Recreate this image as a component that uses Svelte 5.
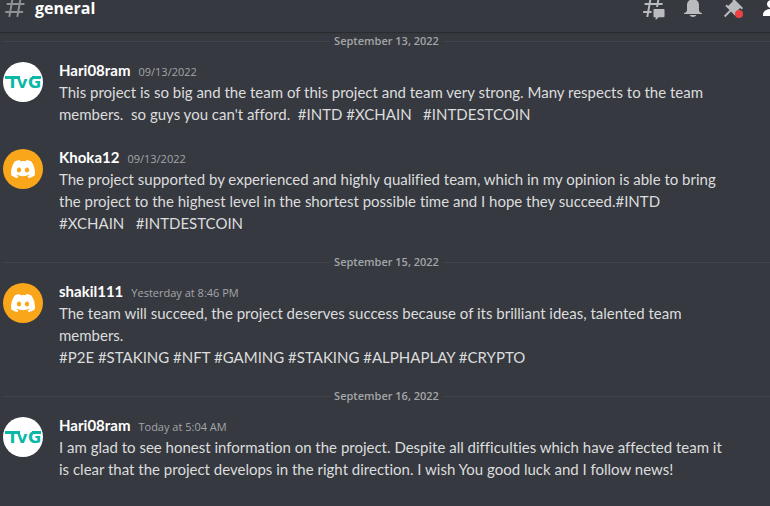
<script lang="ts">
    type Message = {
        author: string
        time: string
        avatar: "tvg" | "discord"
        text: string
    }

    type Day = {
        date: string
        messages: Message[]
    }

    const days: Day[] = [
        {
            date: "September 13, 2022",
            messages: [
                {
                    author: "Hari08ram",
                    time: "09/13/2022",
                    avatar: "tvg",
                    text: "This project is so big and the team of this project and team very strong. Many respects to the team members.  so guys you can't afford.  #INTD #XCHAIN   #INTDESTCOIN",
                },
                {
                    author: "Khoka12",
                    time: "09/13/2022",
                    avatar: "discord",
                    text: "The project supported by experienced and highly qualified team, which in my opinion is able to bring the project to the highest level in the shortest possible time and I hope they succeed.#INTD #XCHAIN   #INTDESTCOIN",
                },
            ],
        },
        {
            date: "September 15, 2022",
            messages: [
                {
                    author: "shakil111",
                    time: "Yesterday at 8:46 PM",
                    avatar: "discord",
                    text: "The team will succeed, the project deserves success because of its brilliant ideas, talented team members.\n#P2E #STAKING #NFT #GAMING #STAKING #ALPHAPLAY #CRYPTO",
                },
            ],
        },
        {
            date: "September 16, 2022",
            messages: [
                {
                    author: "Hari08ram",
                    time: "Today at 5:04 AM",
                    avatar: "tvg",
                    text: "I am glad to see honest information on the project. Despite all difficulties which have affected team it is clear that the project develops in the right direction. I wish You good luck and I follow news!",
                },
            ],
        },
    ]
</script>

<main>
    <header>
        <svg class="hash" viewBox="0 0 24 24" aria-hidden="true">
            <path fill-rule="evenodd" d="M5.88657 21C5.57547 21 5.3399 20.7189 5.39427 20.4126L6.00001 17H2.59511C2.28449 17 2.04905 16.7198 2.10259 16.4138L2.27759 15.4138C2.31946 15.1746 2.52722 15 2.77011 15H6.35001L7.41001 9H4.00511C3.69449 9 3.45905 8.71977 3.51259 8.41381L3.68759 7.41381C3.72946 7.17456 3.93722 7 4.18011 7H7.76001L8.39677 3.41262C8.43914 3.17391 8.64664 3 8.88907 3H9.87344C10.1845 3 10.4201 3.28107 10.3657 3.58738L9.76001 7H15.76L16.3968 3.41262C16.4391 3.17391 16.6466 3 16.8891 3H17.8734C18.1845 3 18.4201 3.28107 18.3657 3.58738L17.76 7H21.1649C21.4755 7 21.711 7.28023 21.6574 7.58619L21.4824 8.58619C21.4406 8.82544 21.2328 9 20.9899 9H17.41L16.35 15H19.7549C20.0655 15 20.301 15.2802 20.2474 15.5862L20.0724 16.5862C20.0306 16.8254 19.8228 17 19.5799 17H16L15.3632 20.5874C15.3209 20.8261 15.1134 21 14.8709 21H13.8866C13.5755 21 13.3399 20.7189 13.3943 20.4126L14 17H8.00001L7.36325 20.5874C7.32088 20.8261 7.11337 21 6.87094 21H5.88657ZM9.41045 9L8.35045 15H14.3504L15.4104 9H9.41045Z" />
        </svg>
        <h1>general</h1>

        <div class="toolbar">
            <button aria-label="Threads">
                <svg viewBox="0 0 24 24">
                    <path d="M5.43309 21C5.35842 21 5.30189 20.9325 5.31494 20.859L5.99991 17H2.14274C2.06819 17 2.01168 16.9327 2.02453 16.8593L2.33253 15.0993C2.34258 15.0419 2.39244 15 2.45074 15H6.34991L7.40991 9H3.55274C3.47819 9 3.42168 8.93274 3.43453 8.85931L3.74253 7.09931C3.75258 7.04189 3.80244 7 3.86074 7H7.75991L8.45234 3.09903C8.46251 3.04174 8.51231 3 8.57049 3H10.3267C10.4014 3 10.4579 3.06746 10.4449 3.14097L9.75991 7H15.7599L16.4523 3.09903C16.4625 3.04174 16.5123 3 16.5705 3H18.3267C18.4014 3 18.4579 3.06746 18.4449 3.14097L17.7599 7H21.6171C21.6916 7 21.7481 7.06725 21.7353 7.14069L21.4273 8.90069C21.4172 8.95811 21.3674 9 21.3091 9H17.4099L17.0495 11.04H15.05L15.4104 9H9.41035L8.35035 15H10.5599V17H7.99991L7.30749 20.901C7.29732 20.9583 7.24752 21 7.18934 21H5.43309Z" />
                    <path d="M13.4399 12.96C12.9097 12.96 12.4799 13.3898 12.4799 13.92V20.2213C12.4799 20.7515 12.9097 21.1813 13.4399 21.1813H14.3999C14.5325 21.1813 14.6399 21.2887 14.6399 21.4213V23.4597C14.6399 23.6677 14.8865 23.7773 15.0408 23.6378L17.4858 21.4289C17.6622 21.2695 17.8916 21.1813 18.1294 21.1813H22.5599C23.0901 21.1813 23.5199 20.7515 23.5199 20.2213V13.92C23.5199 13.3898 23.0901 12.96 22.5599 12.96H13.4399Z" />
                </svg>
            </button>
            <button aria-label="Notification Settings">
                <svg viewBox="0 0 24 24">
                    <path d="M18 9V14C18 15.657 19.344 17 21 17V18H3V17C4.656 17 6 15.657 6 14V9C6 5.686 8.686 3 12 3C15.314 3 18 5.686 18 9ZM12 21C10.524 21 9.248 20.19 8.555 19H15.445C14.752 20.19 13.476 21 12 21Z" />
                </svg>
            </button>
            <button class="pins" aria-label="Pinned Messages">
                <svg viewBox="0 0 24 24">
                    <path d="M22 12L12.101 2.101L10.686 3.514L12.101 4.929L7.151 9.878V9.88L5.736 8.465L4.322 9.88L8.565 14.122L2.908 19.778L4.322 21.192L9.979 15.536L14.222 19.778L15.636 18.364L14.222 16.95L19.171 12H19.172L20.586 13.414L22 12Z" />
                </svg>
                <span class="badge"></span>
            </button>
            <button class="active" aria-label="Member List">
                <svg viewBox="0 0 24 24">
                    <path d="M14 8.006C14 10.211 12.206 12.006 10 12.006C7.795 12.006 6 10.211 6 8.006C6 5.801 7.794 4.006 10 4.006C12.206 4.006 14 5.801 14 8.006ZM2 19.006C2 15.473 5.29 13.006 10 13.006C14.711 13.006 18 15.473 18 19.006V20.006H2V19.006Z" />
                    <path d="M20 20.006H22V19.006C22 16.45 20.248 14.441 17.488 13.557C19.061 14.904 20 16.79 20 19.006V20.006ZM14.883 11.908C16.69 11.501 18 9.908 18 8.006C18 6.105 16.69 4.512 14.883 4.105C15.58 5.24 16 6.575 16 8.006C16 9.44 15.58 10.772 14.883 11.908Z" />
                </svg>
            </button>
        </div>
    </header>

    <section class="chat">
        {#each days as day}
            <div class="divider"><span>{day.date}</span></div>

            {#each day.messages as message}
                <article>
                    {#if message.avatar === "tvg"}
                        <svg class="avatar tvg" viewBox="0 0 40 40" aria-hidden="true">
                            <rect class="disc" width="40" height="40" />
                            <rect x="2" y="14" width="15" height="3" />
                            <rect x="29" y="14" width="9" height="3" />
                            <text x="4 14 25" y="26">TvG</text>
                        </svg>
                    {:else}
                        <svg class="avatar discord" viewBox="0 0 40 40" aria-hidden="true">
                            <rect class="disc" width="40" height="40" />
                            <path transform="translate(8 11) scale(0.189)" d="M107.7,8.07A105.15,105.15,0,0,0,81.47,0a72.06,72.06,0,0,0-3.36,6.83A97.68,97.68,0,0,0,49,6.83,72.37,72.37,0,0,0,45.64,0,105.89,105.89,0,0,0,19.39,8.09C2.79,32.65-1.71,56.6.54,80.21h0A105.73,105.73,0,0,0,32.71,96.36,77.7,77.7,0,0,0,39.6,85.25a68.42,68.42,0,0,1-10.85-5.18c.91-.66,1.8-1.34,2.66-2a75.57,75.57,0,0,0,64.32,0c.87.71,1.76,1.39,2.66,2a68.68,68.68,0,0,1-10.87,5.19,77,77,0,0,0,6.89,11.1A105.25,105.25,0,0,0,126.6,80.22h0C129.24,52.84,122.09,29.11,107.7,8.07ZM42.45,65.69C36.18,65.69,31,60,31,53s5-12.74,11.43-12.74S54,46,53.89,53,48.84,65.69,42.45,65.69Zm42.24,0C78.41,65.69,73.25,60,73.25,53s5-12.74,11.44-12.74S96.23,46,96.12,53,91.08,65.69,84.69,65.69Z" />
                        </svg>
                    {/if}

                    <div class="body">
                        <div class="meta">
                            <h2>{message.author}</h2>
                            <time>{message.time}</time>
                        </div>
                        <p>{message.text}</p>
                    </div>
                </article>
            {/each}
        {/each}
    </section>
</main>

<style>
    :global(body) {
        background: #36393f;
    }

    main {
        min-height: 100vh;
        overflow: hidden;

        background: #36393f;
        color: #dcddde;
        font-family: Lato, "Open Sans", sans-serif;
        font-size: 15px;
        font-variant-ligatures: none;
        line-height: 22px;
    }

    header {
        height: 48px;
        margin-top: -16px;
        padding-left: 3px;

        display: flex;
        align-items: center;

        box-shadow: 0 1px 0 rgba(4, 4, 5, 0.2), 0 2px 0 rgba(6, 6, 7, 0.05);
    }

    svg {
        display: block;
        width: 24px;
        height: 24px;
        flex-shrink: 0;

        fill: #b9bbbe;
    }

    .hash {
        fill: #8e9297;
    }

    h1 {
        margin: 0 0 0 8px;

        color: #ffffff;
        font-family: "Open Sans", sans-serif;
        font-size: 16px;
        font-weight: 700;
        line-height: 16px;
    }

    .toolbar {
        margin-left: auto;
        margin-right: -15px;

        display: flex;
        gap: 16px;
    }

    button {
        position: relative;
        padding: 0;
        border: none;
        background: none;
        cursor: pointer;
    }

    .active svg {
        fill: #ffffff;
    }

    .badge {
        position: absolute;
        right: 2px;
        bottom: 2px;
        width: 8px;
        height: 8px;
        border-radius: 50%;
        background: #ed4245;
    }

    .chat {
        padding: 2px 0 24px 3px;
    }

    .divider {
        margin: 21px 0 11px;

        display: flex;
        align-items: center;
        gap: 4px;

        color: #a3a6aa;
        font-family: "Open Sans", sans-serif;
        font-size: 11px;
        font-weight: 600;
        line-height: 14px;
    }

    .divider:first-child {
        margin-top: 0;
    }

    .divider::before,
    .divider::after {
        content: "";
        flex: 1;
        height: 1px;
        background: #42454b;
    }

    article {
        padding-right: 44px;

        display: flex;
        gap: 16px;
    }

    article + article {
        margin-top: 21px;
    }

    .avatar {
        width: 40px;
        height: 40px;
        margin-top: 3px;
        border-radius: 50%;
    }

    .tvg {
        fill: #0bb8a8;
    }

    .tvg .disc {
        fill: #ffffff;
    }

    .tvg text {
        font-family: "DejaVu Sans", sans-serif;
        font-size: 16px;
        font-weight: 700;
    }

    .discord {
        fill: #ffffff;
    }

    .discord .disc {
        fill: #faa61a;
    }

    .meta {
        height: 22px;

        display: flex;
        align-items: baseline;
        gap: 8px;
    }

    h2 {
        margin: 0;

        color: #ffffff;
        font-size: 15px;
        font-weight: 700;
    }

    time {
        color: #a3a6aa;
        font-family: "Open Sans", sans-serif;
        font-size: 11px;
    }

    p {
        margin: 0;
        white-space: pre-wrap;
    }
</style>
